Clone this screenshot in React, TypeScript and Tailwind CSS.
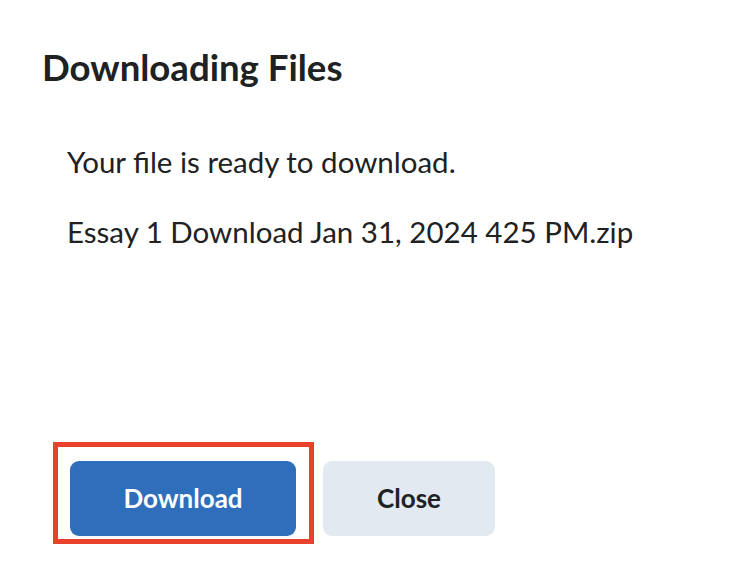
export default function App() {
  return (
    <div className="w-[730px] h-[568px] bg-white text-[#202122] font-['Lato',sans-serif] flex flex-col">
      <h1 className="ml-[42px] mt-[46px] text-[36.6px] font-bold leading-[1.2]">Downloading Files</h1>

      <div className="ml-[67px] mt-[54px] flex flex-col gap-[35px] text-[29.5px] leading-[1.2]">
        <p>Your file is ready to download.</p>
        <p>Essay 1 Download Jan 31, 2024 425 PM.zip</p>
      </div>

      <div className="mt-auto mb-[32px] ml-[70px] flex gap-[27px]">
        <div className="relative">
          <button className="w-[226px] h-[75px] rounded-[9px] bg-[#2f6eba] text-white text-[26px] font-bold">
            Download
          </button>
          {/* annotation box */}
          <div className="absolute left-[-17px] top-[-19px] w-[261px] h-[102px] border-[5px] border-[#e8412c] pointer-events-none"></div>
        </div>
        <button className="w-[172px] h-[75px] rounded-[9px] bg-[#e3e9f1] text-[#202122] text-[26px] font-bold">
          Close
        </button>
      </div>
    </div>
  );
}
